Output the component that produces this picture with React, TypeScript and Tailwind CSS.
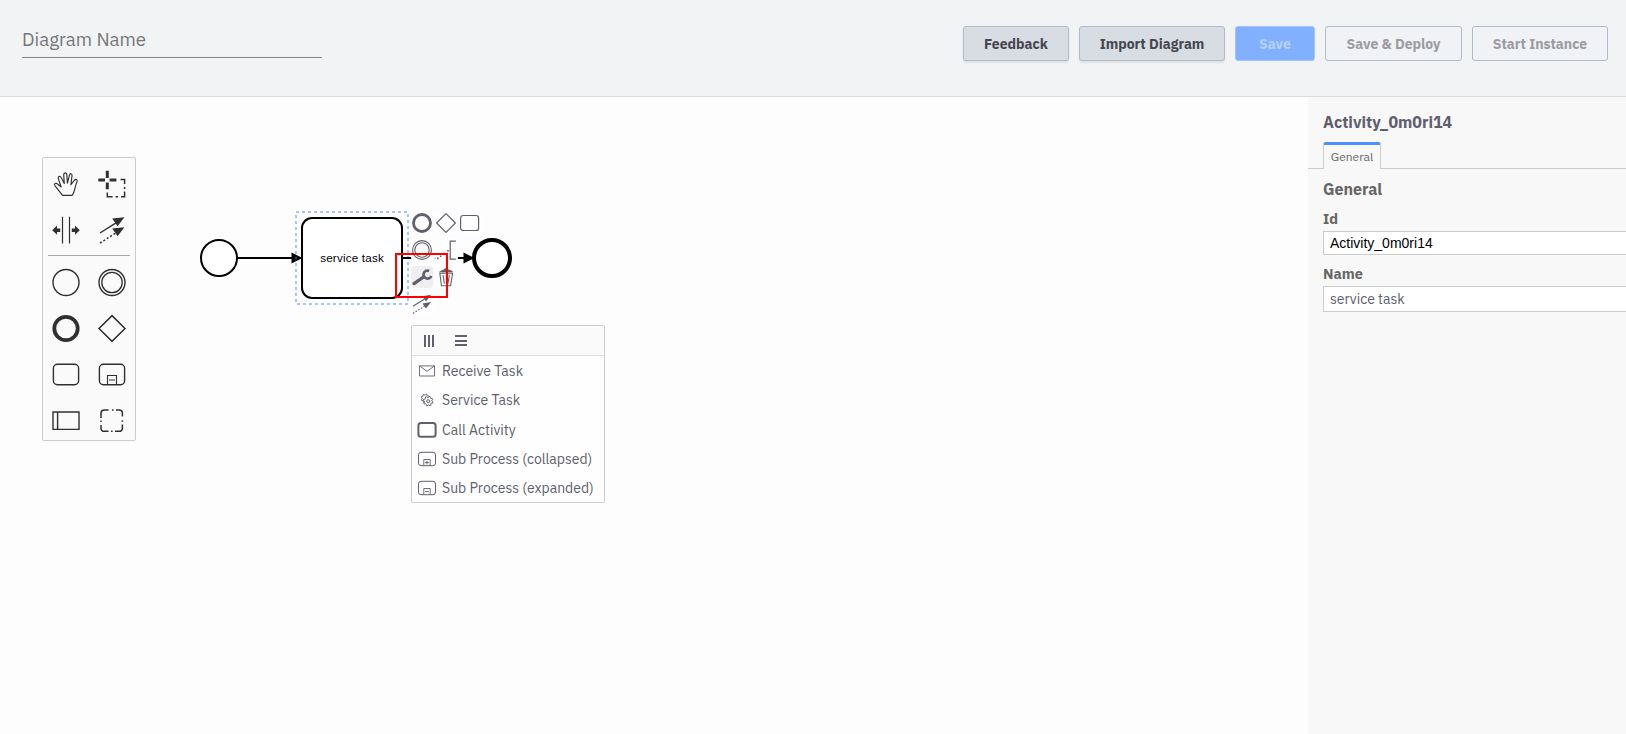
import React from "react";

type IconProps = { className?: string };

const stroke = { fill: "none", stroke: "currentColor" } as const;

/* ---------- palette icons, drawn in a 46x46 cell ---------- */

function Cell({ children }: { children: React.ReactNode }) {
  return (
    <svg width="46" height="46" viewBox="0 0 46 46" className="block text-[#303030]">
      {children}
    </svg>
  );
}

const HandIcon = () => (
  <Cell>
    <path
      {...stroke}
      strokeWidth="1.15"
      strokeLinejoin="round"
      d="M19.6 34.4 L12 24.8 C10.6 22.6 12.6 21.6 14.2 22.8 L18.2 26 L15.3 17.6 C14.8 15 17.3 14.4 18.3 16.8 L21.3 22.6 L20.7 14 C20.7 11.2 23.6 11.2 23.8 13.8 L24.4 22.2 L26.4 14.3 C27 11.8 29.4 12.4 29 14.9 L27.9 23.6 L31.3 19.4 C32.9 17.6 34.9 18.6 33.9 20.9 C31.6 25.5 32.4 30.2 29.2 34.4 Z"
    />
  </Cell>
);

const LassoIcon = () => (
  <Cell>
    <path {...stroke} strokeWidth="3" d="M18.3 9.8v7.2M18.3 21.4v6.8M9.3 18.9H16M20.6 18.9H27.4" />
    <path
      {...stroke}
      strokeWidth="1.5"
      d="M31.5 18.4H35.6V23M35.6 26v2M35.6 30.6V35.8H32M29 35.8h-2.4M23.6 35.8H18.3V31.5"
    />
  </Cell>
);

const SpaceIcon = () => (
  <Cell>
    <path {...stroke} strokeWidth="1.2" d="M19.5 9.7V36.5M26.5 9.7V36.5" />
    <path fill="currentColor" d="M9.2 23.2L14 18.6V21.4H17.2V25H14V27.8ZM36.8 23.2L32 18.6V21.4H28.8V25H32V27.8Z" />
  </Cell>
);

const ConnectIcon = () => (
  <Cell>
    <path {...stroke} strokeWidth="1.4" d="M11 26L27 15.8" />
    <path {...stroke} strokeWidth="1.5" strokeDasharray="2 2" d="M11 36L27 25.8" />
    <path fill="currentColor" d="M35.4 10.2L28.6 19.2L23.2 11.6ZM35.4 20.2L28.6 29.2L23.2 21.6Z" />
  </Cell>
);

const StartIcon = () => (
  <Cell>
    <circle {...stroke} strokeWidth="1.4" cx="23" cy="22.5" r="13" />
  </Cell>
);

const IntermediateIcon = () => (
  <Cell>
    <circle {...stroke} strokeWidth="1.4" cx="23" cy="22.5" r="13" />
    <circle {...stroke} strokeWidth="1.3" cx="23" cy="22.5" r="10.2" />
  </Cell>
);

const EndIcon = () => (
  <Cell>
    <circle {...stroke} strokeWidth="3.8" cx="23" cy="22.5" r="11.7" />
  </Cell>
);

const GatewayIcon = () => (
  <Cell>
    <path {...stroke} strokeWidth="1.5" d="M23 9.6L36 22.5L23 35.4L10 22.5Z" />
  </Cell>
);

const TaskIcon = () => (
  <Cell>
    <rect {...stroke} strokeWidth="1.4" x="10.4" y="12.3" width="25.2" height="20.5" rx="4" />
  </Cell>
);

const SubProcessIcon = () => (
  <Cell>
    <rect {...stroke} strokeWidth="1.4" x="10.4" y="12.3" width="25.2" height="20.5" rx="4" />
    <path {...stroke} strokeWidth="1.1" d="M18.5 33V23.5H27.5V33M20 28H26" />
  </Cell>
);

const ParticipantIcon = () => (
  <Cell>
    <path {...stroke} strokeWidth="1.4" d="M10 14H36V31.4H10ZM14.6 14V31.4" />
  </Cell>
);

const GroupIcon = () => (
  <Cell>
    <path
      {...stroke}
      strokeWidth="1.5"
      transform="translate(0 0.4)"
      d="M12 19.5V15Q12 11.6 15.4 11.6H19.5M27 11.6H30Q33.4 11.6 33.4 15V18M33.4 26V29.5Q33.4 32.9 30 32.9H26M19.5 32.9H15.4Q12 32.9 12 29.5V26.5M12 22v1.6M33.4 21.8v1.6M23 11.6h1.6M22 32.9h1.6"
    />
  </Cell>
);

/* ---------- context pad icons, 22x22 ---------- */

function Pad({ children, className = "" }: IconProps & { children: React.ReactNode }) {
  return (
    <div className={"h-[22px] rounded-sm text-[#60606d] " + (className || "w-6 bg-[#fefefe]")}>
      <svg width="22" height="22" viewBox="0 0 22 22" className="block overflow-visible">
        {children}
      </svg>
    </div>
  );
}

function ContextPad() {
  return (
    <div className="absolute left-[411px] top-[115px] grid grid-cols-[24px_24px_24px] gap-y-[5px]">
      <Pad>
        <circle {...stroke} strokeWidth="2.8" cx="11" cy="11" r="8.5" />
      </Pad>
      <Pad>
        <path {...stroke} strokeWidth="1.2" d="M11 1.6L20.4 11L11 20.4L1.6 11Z" />
      </Pad>
      <Pad>
        <rect {...stroke} strokeWidth="1.2" x="1.6" y="3.5" width="18" height="15" rx="2.6" />
      </Pad>

      <Pad>
        <circle {...stroke} strokeWidth="1.1" cx="11" cy="11" r="9.4" />
        <circle {...stroke} strokeWidth="1.1" cx="11" cy="11" r="7.2" />
      </Pad>
      <Pad className="w-[23px] bg-[#fefefe]">
        <path {...stroke} strokeWidth="1.2" d="M20.8 2.2H15.2V20.2H20.8" />
        <path fill="currentColor" d="M2 18.6h1.6v1.6H2zM5 16.6h1.4v1.4H5zM8.4 13.8h1.6v1.6H8.4zM12.2 10.9h1.6v1.6H12.2z" />
      </Pad>
      <span />

      <Pad className="w-[22px] bg-[#efefef]">
        <path {...stroke} strokeWidth="3.2" strokeLinecap="round" d="M3 17.6L12 11.4" />
        <path {...stroke} strokeWidth="2.7" d="M18.2 4.9A4 4 0 1 0 20.3 10" />
      </Pad>
      <Pad>
        <path {...stroke} strokeWidth="1.1" d="M4.8 7.1H17.6L15.6 19.8H6.5ZM8 9L9.4 17.6M11.3 9V14M14.4 9L12.9 17.6" />
        <path fill="currentColor" d="M4 6Q7 3.8 9 3.5L9.8 2.2H12.6L13.4 3.5Q16 3.9 18.4 6Z" />
      </Pad>
      <span />

      <Pad>
        <path {...stroke} strokeWidth="1.1" d="M2 13.2L13.5 6" />
        <path {...stroke} strokeWidth="1.2" strokeDasharray="1.5 1.6" d="M2 20.4L13.5 13.2" />
        <path fill="currentColor" d="M20.2 1.8L15 8.4L11.4 3.2ZM20.2 9L15 15.6L11.4 10.4Z" />
      </Pad>
    </div>
  );
}

/* ---------- replace menu ---------- */

function MenuIcon({ children }: { children: React.ReactNode }) {
  return (
    <svg width="20" height="20" viewBox="0 0 20 20" className="ml-[5px] mr-[5px] block shrink-0">
      {children}
    </svg>
  );
}

const gear = (cx: number, cy: number, r: number, n: number) => {
  const pts: string[] = [];
  for (let i = 0; i < n * 4; i++) {
    const a = (i / (n * 4)) * Math.PI * 2 + 0.2;
    const rad = i % 4 < 2 ? r : r * 0.76;
    pts.push(`${(cx + rad * Math.cos(a)).toFixed(2)},${(cy + rad * Math.sin(a)).toFixed(2)}`);
  }
  return pts.join(" ");
};

const menuItems: { label: string; icon: React.ReactNode }[] = [
  {
    label: "Receive Task",
    icon: <path {...stroke} strokeWidth="0.9" d="M2.5 4.9H17.5V15H2.5ZM2.5 4.9L10 10.3L17.5 4.9" />,
  },
  {
    label: "Service Task",
    icon: (
      <>
        <polygon {...stroke} strokeWidth="1" points={gear(8.3, 8.3, 4.2, 8)} />
        <polygon fill="#fdfdfd" stroke="currentColor" strokeWidth="1" points={gear(11.2, 11.2, 4.9, 8)} />
        <circle {...stroke} strokeWidth="1" cx="11.2" cy="11.2" r="1.5" />
      </>
    ),
  },
  {
    label: "Call Activity",
    icon: <rect {...stroke} strokeWidth="2" x="1.4" y="3" width="17.2" height="13.8" rx="2.6" />,
  },
  {
    label: "Sub Process (collapsed)",
    icon: (
      <>
        <rect {...stroke} strokeWidth="1" x="1.5" y="3.3" width="17" height="13.4" rx="2.6" />
        <path {...stroke} strokeWidth="0.9" d="M6.8 16.5V10.5H13.2V16.5M8 13.6H12M10 11.7V15.5" />
      </>
    ),
  },
  {
    label: "Sub Process (expanded)",
    icon: (
      <>
        <rect {...stroke} strokeWidth="1" x="1.5" y="3.3" width="17" height="13.4" rx="2.6" />
        <path {...stroke} strokeWidth="0.9" d="M6.8 16.5V10.5H13.2V16.5M8 13.6H12" />
      </>
    ),
  },
];

function ReplaceMenu() {
  return (
    <div className="absolute left-[411px] top-[228px] h-[178px] w-[194px] rounded-[2px] border border-[#cccccc] bg-[#fefefe] text-[#60606d]">
      <div className="flex h-[30px] items-center border-b border-[#dddddd] bg-[#fafafa] pl-3">
        <svg width="44" height="14" viewBox="0 0 44 14" className="block">
          <path {...stroke} strokeWidth="2" d="M1 1V13M5 1V13M9 1V13" />
          <path {...stroke} strokeWidth="2" d="M31 2H43M31 7H43M31 11H43" />
        </svg>
      </div>
      <ul className="pt-[0.5px]">
        {menuItems.map((item) => (
          <li key={item.label} className="flex h-[29.25px] items-center">
            <MenuIcon>{item.icon}</MenuIcon>
            <span className="whitespace-nowrap text-[14px] leading-5">{item.label}</span>
          </li>
        ))}
      </ul>
    </div>
  );
}

/* ---------- page parts ---------- */

function Header() {
  return (
    <header className="flex h-[97px] shrink-0 items-start justify-between border-b border-[#d8dce5] bg-[#f1f3f5] pl-[22px] pr-[18px]">
      <div className="mt-[22px] h-9 w-[300px] border-b border-[#868686]">
        <span className="block text-[18.66px] leading-[35px] text-[#777777]">Diagram Name</span>
      </div>
      <div className="mt-[26px] flex gap-2.5 text-[14px] font-bold">
        <button className="h-[35px] w-[106px] rounded-[3px] border border-[#b0bac9] bg-[#d8dce3] pt-px text-[#45464e] shadow-[0_2px_2px_rgba(0,0,0,0.08)]">
          Feedback
        </button>
        <button className="h-[35px] w-[146px] whitespace-nowrap rounded-[3px] border border-[#b0bac9] bg-[#d8dce3] pt-px text-[#45464e] shadow-[0_2px_2px_rgba(0,0,0,0.08)]">
          Import Diagram
        </button>
        <button className="h-[35px] w-20 rounded-[3px] border border-[#a2c5ff] bg-[#80b0ff] pt-px text-[#b8d3ff]">
          Save
        </button>
        <button className="h-[35px] w-[137px] whitespace-nowrap rounded-[3px] border border-[#b0bac9] bg-[#f1f2f5] pt-px text-[#9b9ca1]">
          Save &amp; Deploy
        </button>
        <button className="h-[35px] w-[136px] whitespace-nowrap rounded-[3px] border border-[#b0bac9] bg-[#f1f2f5] pt-px text-[#9b9ca1]">
          Start Instance
        </button>
      </div>
    </header>
  );
}

function Palette() {
  return (
    <div className="absolute left-[42px] top-[60px] h-[284px] w-[94px] rounded-[2px] border border-[#cccccc] bg-[#fafafa] pt-[3px]">
      <div className="grid grid-cols-2">
        <HandIcon />
        <LassoIcon />
        <SpaceIcon />
        <ConnectIcon />
      </div>
      <hr className="mx-[5px] mb-1 mt-[2px] border-t border-[#aaaaaa]" />
      <div className="grid grid-cols-2">
        <StartIcon />
        <IntermediateIcon />
        <EndIcon />
        <GatewayIcon />
        <TaskIcon />
        <SubProcessIcon />
        <ParticipantIcon />
        <GroupIcon />
      </div>
    </div>
  );
}

function Diagram() {
  return (
    <svg width="620" height="420" viewBox="0 97 620 420" className="absolute left-0 top-0">
      <rect x="296" y="212" width="112" height="92" fill="none" stroke="#a3c5fb" strokeWidth="2" strokeDasharray="3 3" />
      <circle cx="219" cy="258" r="18" fill="#fff" stroke="#000" strokeWidth="2" />
      <path d="M237 258H296M403 258H473" stroke="#000" strokeWidth="2" />
      <path d="M291.5 252.5L302.5 258L291.5 263.5ZM463.5 252.5L474.5 258L463.5 263.5Z" />
      <path d="M295 256.5h2v3h-2z" fill="#27364f" />
      <rect x="302" y="218" width="100" height="80" rx="10" fill="#fff" stroke="#000" strokeWidth="2" />
      <text
        x="320.2"
        y="262"
        textLength="63.5"
        fontSize="11.6"
        fontFamily="Liberation Sans, Arial, sans-serif"
      >
        service task
      </text>
      <circle cx="492" cy="258" r="18" fill="#fff" stroke="#000" strokeWidth="4" />
    </svg>
  );
}

function Properties() {
  return (
    <aside className="flex w-[318px] shrink-0 flex-col overflow-hidden bg-[#f8f8f8] text-[#666666]">
      <h1 className="ml-[15px] mt-[13px] text-[16px] font-bold leading-6 text-[#60606d]">Activity_0m0ri14</h1>
      <div className="mt-2 flex h-[27px]">
        <div className="w-[15px] border-b border-[#cccccc]" />
        <div className="flex h-[27px] w-[58px] flex-col overflow-hidden rounded-t-[2px] border-x border-[#cccccc]">
          <div className="-mx-px h-[3px] shrink-0 bg-[#4d90ff]" />
          <span className="text-center text-[12px] leading-[23px]">General</span>
        </div>
        <div className="grow border-b border-[#cccccc]" />
      </div>
      <h2 className="ml-[15px] mt-2 text-[16px] font-bold leading-6">General</h2>
      <label className="ml-[15px] mt-2 text-[14.5px] font-bold leading-5">Id</label>
      <div className="ml-[15px] mt-[2px] h-6 w-[330px] border border-[#cccccc] bg-white pl-1.5 font-['Liberation_Sans',Arial,sans-serif] text-[14px] leading-[23px] text-black">
        Activity_0m0ri14
      </div>
      <label className="ml-[15px] mt-[9px] text-[14.5px] font-bold leading-5">Name</label>
      <div className="ml-[15px] mt-[2px] h-[26px] w-[330px] border border-[#cccccc] bg-white pl-1.5 text-[14px] leading-6 text-[#60606d]">
        service task
      </div>
    </aside>
  );
}

export default function App() {
  return (
    <div className="flex h-[734px] w-full flex-col overflow-hidden bg-[#fdfdfd] font-['IBM_Plex_Sans',Roboto,sans-serif]">
      <Header />
      <div className="flex min-h-0 grow">
        <main className="relative min-w-0 grow overflow-hidden">
          <Diagram />
          <Palette />
          <ContextPad />
          <ReplaceMenu />
          <div className="absolute left-[395px] top-[156px] h-[45px] w-[53px] border-2 border-[#ff0000]" />
        </main>
        <Properties />
      </div>
    </div>
  );
}
